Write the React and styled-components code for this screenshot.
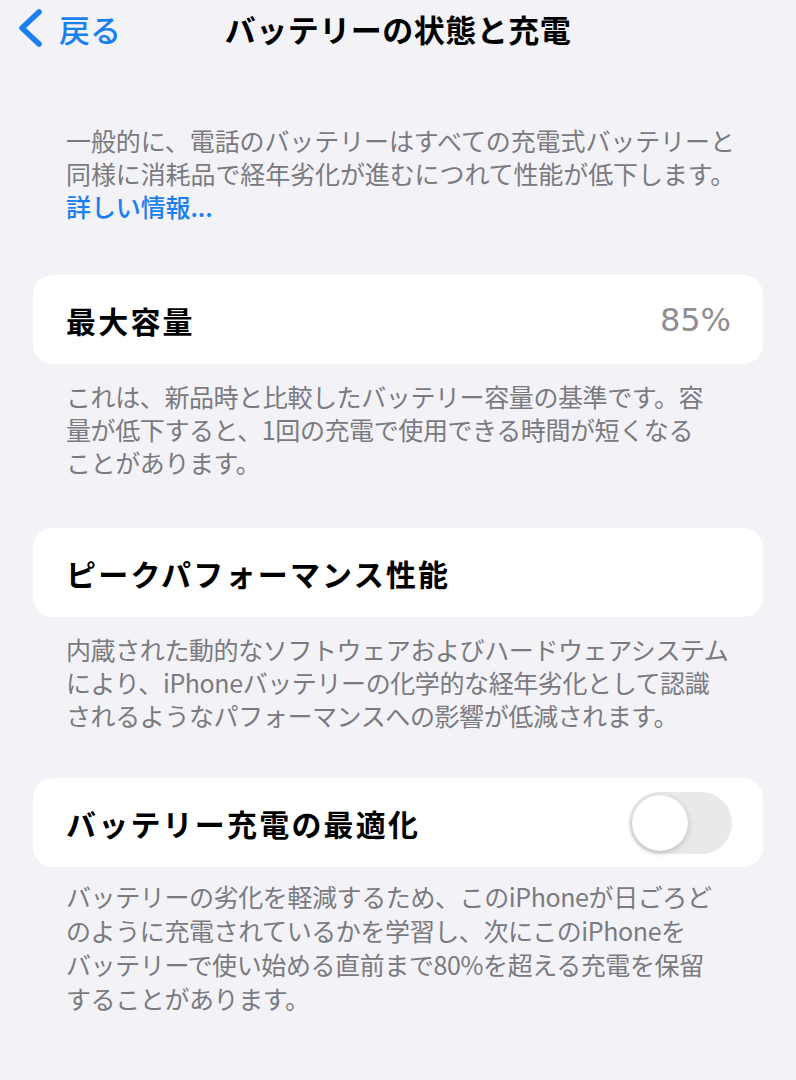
import React from "react";
import styled, { createGlobalStyle } from "styled-components";

const GlobalStyle = createGlobalStyle`
  html, body {
    margin: 0;
    padding: 0;
    background: #f2f2f7;
  }
  body {
    font-family: "Noto Sans CJK JP", "Noto Sans", sans-serif;
    -webkit-font-smoothing: antialiased;
  }
`;

const Page = styled.div`
  width: 796px;
  min-height: 1080px;
  background: #f2f2f7;
  box-sizing: border-box;
`;

const Header = styled.header`
  height: 56px;
  display: grid;
  grid-template-columns: 1fr auto 1fr;
  align-items: center;
`;

const Back = styled.a`
  display: flex;
  align-items: center;
  gap: 14px;
  padding-left: 17px;
  color: #1a7ff0;
  font-size: 31px;
  font-weight: 500;
  text-decoration: none;
  line-height: 1;
`;

const Title = styled.h1`
  margin: 0;
  font-size: 31px;
  font-weight: 700;
  color: #000;
  letter-spacing: 0.5px;
`;

const Intro = styled.p`
  margin: 68px 0 0;
  padding: 0 66px;
  font-size: 25px;
  line-height: 33px;
  color: #7a7a7f;
  letter-spacing: -0.1px;
  white-space: nowrap;
`;

const Link = styled.a`
  color: #1a7ff0;
  font-weight: 500;
  text-decoration: none;
`;

const Group = styled.section`
  margin-top: ${(p) => p.$top}px;
`;

const Card = styled.div`
  margin: 0 33px;
  height: 89px;
  background: #fff;
  border-radius: 20px;
  display: flex;
  align-items: center;
  justify-content: space-between;
  padding: 0 32px 0 33px;
  box-sizing: border-box;
`;

const Label = styled.span`
  font-size: 30px;
  font-weight: 700;
  color: #000;
  letter-spacing: 2.2px;
`;

const Value = styled.span`
  font-family: "DejaVu Sans", "Liberation Sans", sans-serif;
  font-size: 32px;
  color: #8e8e93;
`;

const Footer = styled.p`
  margin: ${(p) => p.$gap || 16}px 0 0;
  padding: 0 66px;
  font-size: 25px;
  line-height: ${(p) => p.$line || 33}px;
  color: #7a7a7f;
  letter-spacing: -0.4px;
  white-space: nowrap;
`;

const Track = styled.span`
  width: 103px;
  height: 62px;
  border-radius: 31px;
  background: #e9e9ea;
  display: flex;
  align-items: center;
  padding: 0 3px;
  box-sizing: border-box;
  margin-right: -1px;
`;

const Knob = styled.span`
  width: 56px;
  height: 56px;
  border-radius: 50%;
  background: #fff;
  box-shadow: 0 2px 6px rgba(0, 0, 0, 0.18), 0 0 1px rgba(0, 0, 0, 0.12);
`;

const Chevron = () => (
  <svg width="28" height="40" viewBox="0 0 28 40">
    <path
      d="M22 4 L5 20 L22 36"
      fill="none"
      stroke="#1a7ff0"
      strokeWidth="5.5"
      strokeLinecap="round"
      strokeLinejoin="round"
    />
  </svg>
);

export default function App() {
  return (
    <Page>
      <GlobalStyle />
      <Header>
        <Back href="#">
          <Chevron />
          <span>戻る</span>
        </Back>
        <Title>バッテリーの状態と充電</Title>
        <span />
      </Header>

      <Intro>
        一般的に、電話のバッテリーはすべての充電式バッテリーと
        <br />
        同様に消耗品で経年劣化が進むにつれて性能が低下します。
        <br />
        <Link href="#">詳しい情報...</Link>
      </Intro>

      <Group $top={52}>
        <Card>
          <Label>最大容量</Label>
          <Value>85%</Value>
        </Card>
        <Footer>
          これは、新品時と比較したバッテリー容量の基準です。容
          <br />
          量が低下すると、1回の充電で使用できる時間が短くなる
          <br />
          ことがあります。
        </Footer>
      </Group>

      <Group $top={49}>
        <Card>
          <Label>ピークパフォーマンス性能</Label>
        </Card>
        <Footer>
          内蔵された動的なソフトウェアおよびハードウェアシステム
          <br />
          により、iPhoneバッテリーの化学的な経年劣化として認識
          <br />
          されるようなパフォーマンスへの影響が低減されます。
        </Footer>
      </Group>

      <Group $top={46}>
        <Card>
          <Label>バッテリー充電の最適化</Label>
          <Track>
            <Knob />
          </Track>
        </Card>
        <Footer $gap={12} $line={34}>
          バッテリーの劣化を軽減するため、このiPhoneが日ごろど
          <br />
          のように充電されているかを学習し、次にこのiPhoneを
          <br />
          バッテリーで使い始める直前まで80%を超える充電を保留
          <br />
          することがあります。
        </Footer>
      </Group>
    </Page>
  );
}
